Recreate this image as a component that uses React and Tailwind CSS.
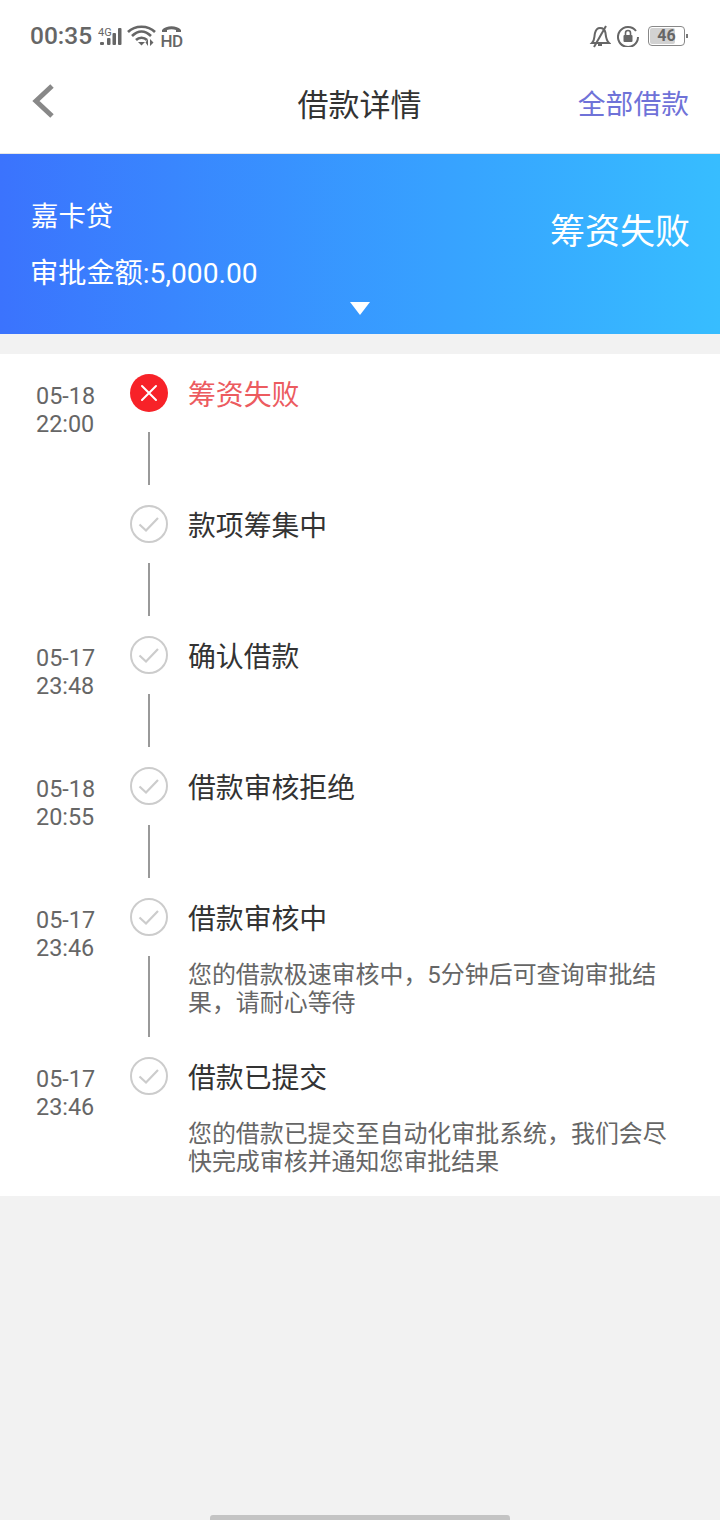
import React from "react";

const steps = [
  { date: "05-18", time: "22:00", title: "筹资失败", failed: true },
  { title: "款项筹集中" },
  { date: "05-17", time: "23:48", title: "确认借款" },
  { date: "05-18", time: "20:55", title: "借款审核拒绝" },
  { date: "05-17", time: "23:46", title: "借款审核中", desc: ["您的借款极速审核中，5分钟后可查询审批结", "果，请耐心等待"] },
  { date: "05-17", time: "23:46", title: "借款已提交", desc: ["您的借款已提交至自动化审批系统，我们会尽", "快完成审核并通知您审批结果"], last: true },
];

function StepIcon({ failed }) {
  if (failed) {
    return (
      <svg width="38" height="38" viewBox="0 0 38 38" className="block">
        <circle cx="19" cy="19" r="19" fill="#f72228" />
        <path d="M12 12 L26 26 M26 12 L12 26" stroke="#fff" strokeWidth="2" strokeLinecap="round" />
      </svg>
    );
  }
  return (
    <svg width="38" height="38" viewBox="0 0 38 38" className="block">
      <circle cx="19" cy="19" r="18" fill="#fff" stroke="#cccccc" strokeWidth="2" />
      <path d="M9.5 19.5 L16 25.5 L28 13" fill="none" stroke="#cccccc" strokeWidth="2.2" />
    </svg>
  );
}

function StatusBar() {
  return (
    <div className="flex h-[72px] items-center justify-between pl-[30px] pr-[32px] text-[#666666]">
      <div className="flex items-center">
        <span className="w-[62px] whitespace-nowrap text-[24.5px] font-medium leading-none">00:35</span>
        <svg width="26" height="24" viewBox="0 0 26 24" className="ml-[6px]">
          <text x="0" y="12" fontSize="11" fill="#666666" fontFamily="Roboto, sans-serif">4G</text>
          <rect x="2" y="18" width="4" height="3" rx="1" fill="#666666" />
          <rect x="9" y="14" width="3.5" height="7" rx="1" fill="#666666" />
          <rect x="14.5" y="9" width="3.5" height="12" rx="1" fill="#666666" />
          <rect x="20" y="4" width="3.5" height="17" rx="1" fill="#666666" />
        </svg>
        <svg width="30" height="24" viewBox="0 0 30 24" className="ml-[3px]">
          <path d="M1 8 C8 1 21 1 28 8 M5 12 C11 6 18 6 24 12 M9 16 C12 13 17 13 20 16" fill="none" stroke="#666666" strokeWidth="2.6" />
          <path d="M11 18 L18 18 L14.5 21.5 Z" fill="#666666" />
          <path d="M21 15 L21 22 L18.5 18.5 Z M23 15 L23 22 L26.5 18.5 Z" fill="#666666" />
        </svg>
        <div className="ml-[4px] flex w-[21px] flex-col items-center">
          <svg width="21" height="8" viewBox="0 0 21 8" className="block">
            <path d="M1 7 L1 5 C5 0 16 0 20 5 L20 7 L15 7 L15 5 C12 4 9 4 6 5 L6 7 Z" fill="#666666" />
          </svg>
          <span className="mt-[1px] text-[17px] font-medium leading-[14px] tracking-[-0.5px]">HD</span>
        </div>
      </div>
      <div className="flex items-center">
        <svg width="22" height="24" viewBox="0 0 22 24">
          <path d="M3 19 C6 16 5 13 6 9 C7 5 9 4 11 4 C14 4 16 6 16.5 9 C17 13 17 16 20 19 Z" fill="none" stroke="#666666" strokeWidth="2" />
          <path d="M9 21 L13 21" stroke="#666666" strokeWidth="2" />
          <path d="M17 2 L5 23" stroke="#666666" strokeWidth="2" />
        </svg>
        <svg width="22" height="22" viewBox="0 0 22 22" className="ml-[6px]">
          <path d="M19 6 A10 10 0 1 0 21 12" fill="none" stroke="#666666" strokeWidth="2" />
          <rect x="6.5" y="10" width="9" height="7" rx="1" fill="#666666" />
          <path d="M8.5 10 V8 A2.5 2.5 0 0 1 13.5 8 V10" fill="none" stroke="#666666" strokeWidth="1.6" />
        </svg>
        <div className="relative ml-[9px] flex h-[20px] w-[37px] items-center justify-center overflow-hidden rounded-[4px] border border-[#888888]">
          <div className="absolute inset-y-[1px] left-[1px] w-[72%] rounded-[2px] bg-[#d2d2d2]" />
          <span className="relative text-[16px] font-bold leading-none text-[#666666]">46</span>
        </div>
        <div className="ml-[1px] h-[4px] w-[2px] bg-[#777777]" />
      </div>
    </div>
  );
}

export default function App() {
  return (
    <div className="relative flex h-[1520px] w-[720px] flex-col overflow-hidden bg-[#f2f2f2] font-['Roboto','Noto_Sans_CJK_SC',sans-serif]">
      <div className="bg-white">
        <StatusBar />
        <div className="grid h-[82px] grid-cols-[1fr_auto_1fr] items-center border-b border-[#e6e6e6] pb-[15px] pl-[30px] pr-[31px]">
          <svg width="28" height="38" viewBox="0 0 28 38" className="-mt-[8px]">
            <path d="M22 4 L6 19 L22 34" fill="none" stroke="#888888" strokeWidth="5" />
          </svg>
          <span className="text-[31px] leading-none text-[#333333]">借款详情</span>
          <span className="-mt-[1px] justify-self-end text-[27.8px] leading-none text-[#6f72d8]">全部借款</span>
        </div>
      </div>

      <div className="relative flex h-[180px] items-start justify-between bg-gradient-to-r from-[#3b73fd] to-[#37bdff] pl-[31px] pr-[30px] text-white">
        <div>
          <div className="mt-[47px] text-[27.4px] leading-[32px]">嘉卡贷</div>
          <div className="mt-[25px] -ml-[1px] whitespace-nowrap text-[28.2px] leading-[32px]">审批金额:5,000.00</div>
        </div>
        <div className="mt-[59px] text-[35px] leading-[40px]">筹资失败</div>
        <svg width="20" height="13" viewBox="0 0 20 13" className="absolute bottom-[19px] left-[350px]">
          <path d="M0 0 H20 L10 13 Z" fill="#ffffff" />
        </svg>
      </div>

      <div className="mt-[20px] bg-white pt-[20px] pb-[20px]">
        {steps.map((s, i) => (
          <div key={i} className="flex">
            <div className="w-[130px] shrink-0 pl-[36px] text-[23.4px] leading-[28px] text-[#666666]">
              <div className="mt-[8px]">{s.date}</div>
              <div>{s.time}</div>
            </div>
            <div className="flex w-[38px] shrink-0 flex-col items-center">
              <StepIcon failed={s.failed} />
              {!s.last && <div className="mt-[20px] mb-[20px] w-[2px] grow bg-[#999999]" />}
            </div>
            <div className={`ml-[20px] min-w-0 grow pt-[2px] ${s.last ? "" : "min-h-[131px]"}`}>
              <div className={`text-[27.85px] leading-[40px] ${s.failed ? "text-[#ec5b5f]" : "text-[#333333]"}`}>{s.title}</div>
              {s.desc && (
                <div className="mt-[21px] text-[23.95px] leading-[28px] text-[#666666]">
                  {s.desc.map((line) => (
                    <div key={line} className="whitespace-nowrap">{line}</div>
                  ))}
                </div>
              )}
              {s.desc && !s.last && <div className="h-[40px]" />}
            </div>
          </div>
        ))}
      </div>

      <div className="absolute bottom-0 left-[210px] h-[5px] w-[300px] rounded-t-[3px] bg-[#c4c4c4]" />
    </div>
  );
}
